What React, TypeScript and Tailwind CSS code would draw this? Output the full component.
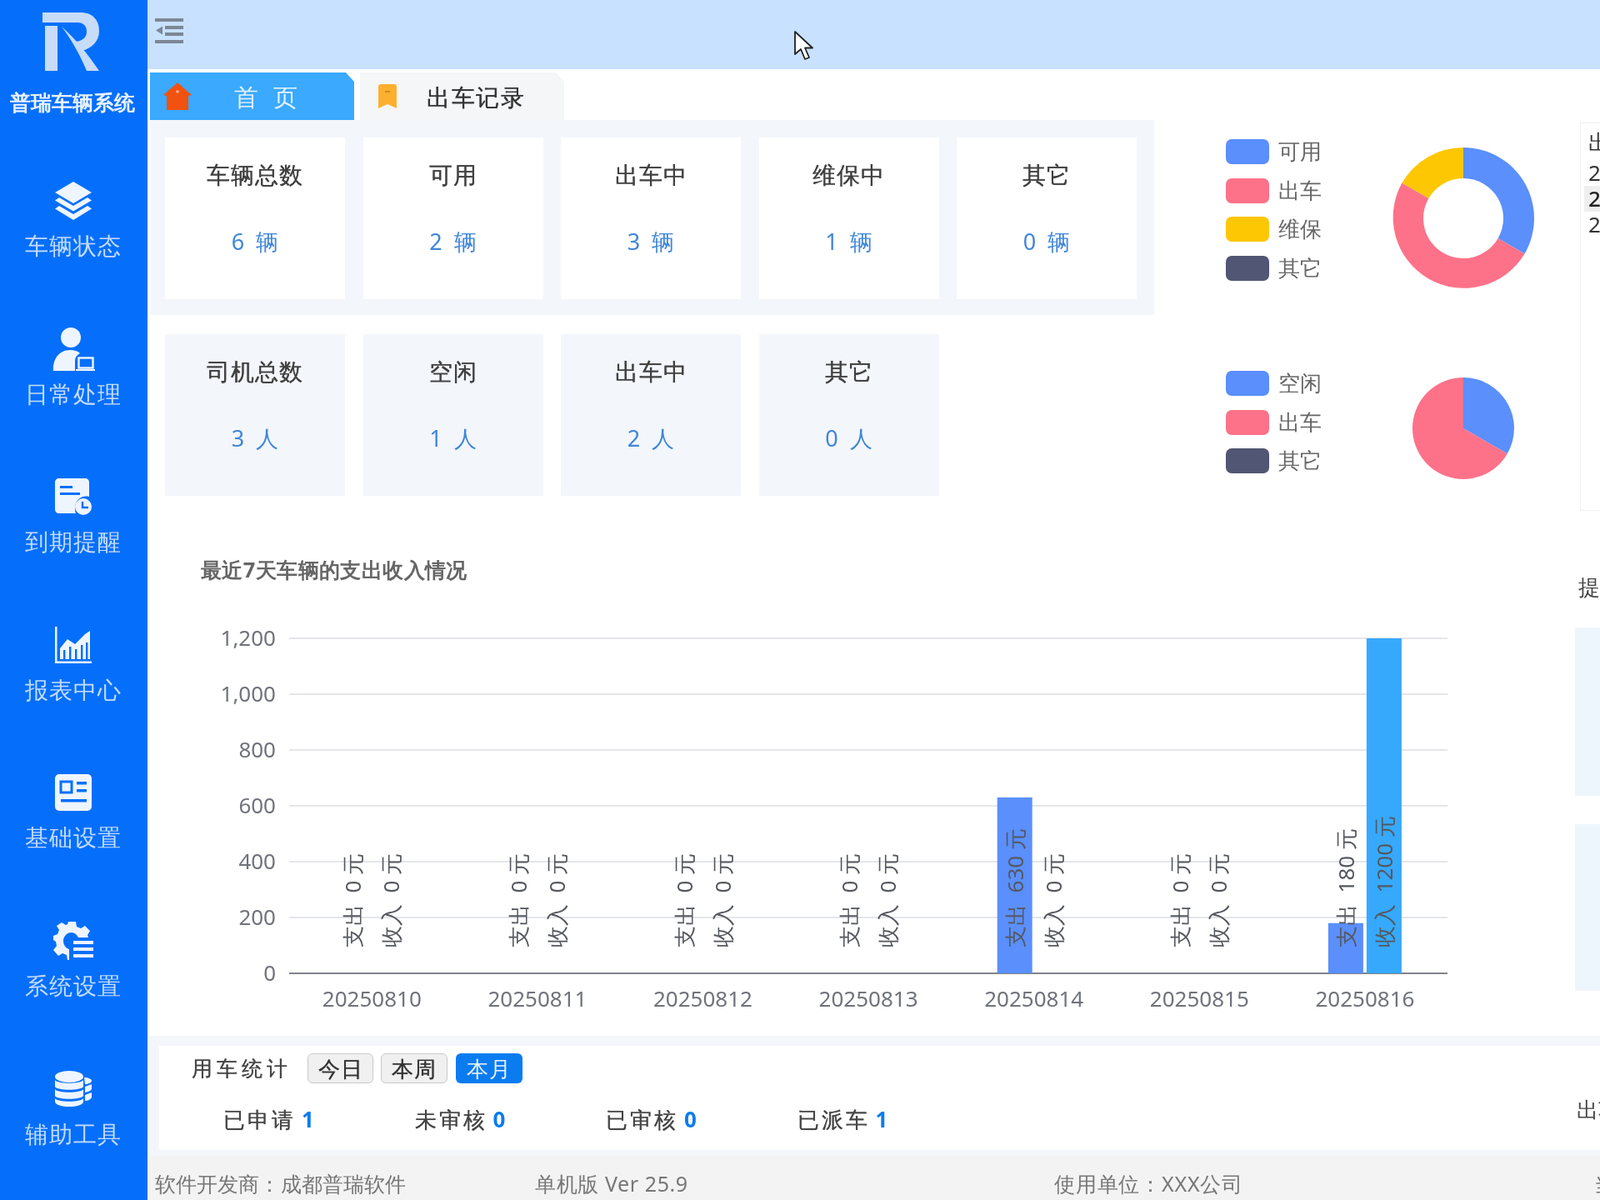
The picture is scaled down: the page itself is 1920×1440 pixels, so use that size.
import React from "react";

const FONT = '[font-family:"Noto_Sans","Noto_Sans_CJK_SC",sans-serif]';
const ICON = "#eef5ff";
const SIDE = "#056ffb";
const HEAVY = "[text-shadow:0_0_0.7px_currentColor]";

function Logo() {
  return (
    <svg width="70" height="72" viewBox="49 14 70 72" fill="#c7dcf8">
      <path d="M50 15H96C110 15 118 24 118 37C118 50 109 58 97 61L90 50C98 49 103 45 103 38C103 31 99 27 92 27H50Z" />
      <path d="M53 31H68V85H53Z" />
      <path d="M73 32C90 47 105 66 118 85H103C95 66 85 48 73 32Z" />
    </svg>
  );
}

const LayersIcon = () => (
  <svg width="50" height="50" viewBox="0 0 50 50" fill={ICON}>
    <path d="M25 2L47 15L25 28L3 15Z" />
    <path d="M8 21L25 31L42 21L47 24.5L25 37.5L3 24.5Z" />
    <path d="M8 31L25 41L42 31L47 34.5L25 48L3 34.5Z" />
  </svg>
);
const UserIcon = () => (
  <svg width="52" height="52" viewBox="0 0 52 52" fill={ICON}>
    <circle cx="23" cy="12" r="12" />
    <path d="M2 52C1 38 9 27 22 27C27 27 31 28 34 31C30 33 28 36 28 40V52Z" />
    <rect x="32.5" y="36.5" width="17" height="12" fill="none" stroke={ICON} strokeWidth="2.4" />
    <rect x="29" y="50" width="23" height="2" />
  </svg>
);
const CalendarIcon = () => (
  <svg width="44" height="44" viewBox="0 0 44 44" fill={ICON}>
    <path d="M5 0H36C39 0 41 2 41 5V22C34 20 24 24 24 36C24 38 24 40 25 42H5C2 42 0 40 0 37V5C0 2 2 0 5 0Z" />
    <rect x="6" y="9" width="15" height="3" fill={SIDE} />
    <rect x="6" y="17" width="24" height="3" fill={SIDE} />
    <circle cx="34" cy="34" r="10" />
    <path d="M33 28V35H40" fill="none" stroke={SIDE} strokeWidth="2.4" />
  </svg>
);
const ChartIcon = () => (
  <svg width="44" height="44" viewBox="0 0 44 44" fill={ICON}>
    <rect x="0" y="0" width="2.5" height="44" />
    <rect x="0" y="41.5" width="44" height="2.5" />
    <path d="M6 26L15 15L24 21L36 9L42 5V39H6Z" />
    <rect x="10" y="28" width="2.4" height="11" fill={SIDE} />
    <rect x="17" y="24" width="2.4" height="15" fill={SIDE} />
    <rect x="24" y="27" width="2.4" height="12" fill={SIDE} />
    <rect x="31" y="22" width="2.4" height="17" fill={SIDE} />
    <rect x="37" y="19" width="2.4" height="20" fill={SIDE} />
  </svg>
);
const NewsIcon = () => (
  <svg width="44" height="44" viewBox="0 0 44 44" fill={ICON}>
    <rect x="0" y="0" width="44" height="44" rx="5" />
    <rect x="7" y="9" width="13" height="13" fill="none" stroke={SIDE} strokeWidth="3" />
    <rect x="26" y="9" width="12" height="3.5" fill={SIDE} />
    <rect x="26" y="18" width="12" height="3.5" fill={SIDE} />
    <rect x="7" y="30" width="31" height="3.5" fill={SIDE} />
  </svg>
);
const GearIcon = () => (
  <svg width="48" height="46" viewBox="0 0 48 46" fill={ICON}>
    <path d="M18 0H27L28 6L33 8L38 5L44 11L41 16L42 19H30C28 15 25 13 22 13C16 13 12 18 12 23C12 28 15 32 19 33V46H17L16 40L11 38L6 41L0 34L4 29L3 24L0 22V17L5 15L7 10L4 5L10 1L15 4L17 3Z" />
    <rect x="24" y="23" width="24" height="4" />
    <rect x="24" y="31" width="24" height="4" />
    <rect x="24" y="39" width="24" height="4" />
  </svg>
);
const CoinsIcon = () => (
  <svg width="44" height="44" viewBox="0 0 44 44" fill={ICON}>
    <ellipse cx="17" cy="7" rx="17" ry="7" />
    <path d="M0 11C3 16 31 16 34 11V19C31 24 3 24 0 19Z" />
    <path d="M0 22C3 27 31 27 34 22V30C31 35 3 35 0 30Z" />
    <path d="M0 33C3 38 31 38 34 33V37C33 45 1 45 0 37Z" />
    <path d="M35 8C40 8 44 10 44 12C44 14 40 16 36 16Z" />
    <path d="M36 19L44 16V22C43 24 40 25 36 26Z" />
    <path d="M36 29L44 26V32C43 34 40 36 36 36Z" />
  </svg>
);

const menus: [React.ReactNode, string][] = [
  [<LayersIcon />, "车辆状态"],
  [<UserIcon />, "日常处理"],
  [<CalendarIcon />, "到期提醒"],
  [<ChartIcon />, "报表中心"],
  [<NewsIcon />, "基础设置"],
  [<GearIcon />, "系统设置"],
  [<CoinsIcon />, "辅助工具"],
];

function Sidebar() {
  return (
    <aside className="w-[177px] h-full shrink-0 bg-[#056ffb] flex flex-col items-center overflow-hidden">
      <div className="h-[216px] shrink-0 w-full flex flex-col items-center pt-[14px]">
        <div className="mr-[8px]">
          <Logo />
        </div>
        <div className="mt-[21px] mr-[4px] text-[24.5px] leading-[32px] font-bold text-[#e9f2ff] whitespace-nowrap">普瑞车辆系统</div>
      </div>
      {menus.map(([icon, label]) => (
        <div key={label} className="h-[177.6px] w-full shrink-0 flex flex-col items-center">
          <div className="h-[50px] mr-[2px] flex items-center justify-center">{icon}</div>
          <div className="mt-[10px] mr-[2px] text-[28px] leading-[36px] tracking-[1px] text-[#c4dcff] whitespace-nowrap">{label}</div>
        </div>
      ))}
    </aside>
  );
}

function Card({ title, value, muted }: { title: string; value: string; muted?: boolean }) {
  return (
    <div className={`w-[216px] h-[194px] shrink-0 flex flex-col items-center pt-[26px] ${muted ? "bg-[#f3f6fa]" : "bg-white"}`}>
      <div className={`text-[28px] leading-[36px] tracking-[1px] font-medium text-[#404040] ${HEAVY}`}>{title}</div>
      <div className="mt-[45px] text-[27px] leading-[36px] text-[#3f86d9] whitespace-pre">{value}</div>
    </div>
  );
}

function Legend({ items }: { items: [string, string][] }) {
  return (
    <div className="w-[115px] flex flex-col gap-[16.5px]">
      {items.map(([color, label]) => (
        <div key={label} className="h-[30px] flex items-center gap-[11px]">
          <div className="w-[52px] h-[30px] rounded-[7px]" style={{ backgroundColor: color }} />
          <span className="text-[26px] leading-[30px] -mt-[2px] text-[#666] whitespace-nowrap">{label}</span>
        </div>
      ))}
    </div>
  );
}

const BLUE = "#5a8ffc";
const PINK = "#fd7289";
const YELLOW = "#fec703";
const NAVY = "#505673";

function Donut() {
  return (
    <svg width="170" height="170" viewBox="0 0 170 170">
      <path d="M85 0A85 85 0 0 1 158.6 127.5L126.6 109A48 48 0 0 0 85 37Z" fill={BLUE} />
      <path d="M158.6 127.5A85 85 0 0 1 11.4 42.5L43.4 61A48 48 0 0 0 126.6 109Z" fill={PINK} />
      <path d="M11.4 42.5A85 85 0 0 1 85 0V37A48 48 0 0 0 43.4 61Z" fill={YELLOW} />
    </svg>
  );
}

function Pie() {
  return (
    <svg width="122" height="122" viewBox="0 0 122 122">
      <path d="M61 61V0A61 61 0 0 1 113.8 91.5Z" fill={BLUE} />
      <path d="M61 61L113.8 91.5A61 61 0 1 1 61 0Z" fill={PINK} />
    </svg>
  );
}

const days = ["20250810", "20250811", "20250812", "20250813", "20250814", "20250815", "20250816"];
const pay = [0, 0, 0, 0, 630, 0, 180];
const income = [0, 0, 0, 0, 0, 0, 1200];
const ticks = [0, 200, 400, 600, 800, 1000, 1200];

function BarChart() {
  const y0 = 1167;
  const unit = 402 / 1200;
  const left = 347;
  const step = 198.6;
  return (
    <svg width="1510" height="490" viewBox="240 740 1510 490" className="block">
      {ticks.map((t) => {
        const y = y0 - t * unit;
        return (
          <g key={t}>
            <line x1={left} x2={1737} y1={y} y2={y} stroke={t === 0 ? "#80838c" : "#e4e6ea"} strokeWidth="2" />
            <text x={331} y={y + 9} textAnchor="end" fontSize="26" fill="#70737c">
              {t === 0 ? "0" : t.toLocaleString("en-US")}
            </text>
          </g>
        );
      })}
      {days.map((d, i) => {
        const c = left + step * (i + 0.5);
        const h1 = pay[i] * unit;
        const h2 = income[i] * unit;
        return (
          <g key={d}>
            {h1 > 0 && <rect x={c - 44} y={y0 - h1} width="42" height={h1} fill={BLUE} />}
            {h2 > 0 && <rect x={c + 2} y={y0 - h2} width="42" height={h2} fill="#36a9fd" />}
            <text transform={`translate(${c - 13},1136) rotate(-90)`} fontSize="26" fill="#55585f" style={{ whiteSpace: "pre" }}>
              {`支出  ${pay[i]} 元`}
            </text>
            <text transform={`translate(${c + 33},1136) rotate(-90)`} fontSize="26" fill="#55585f" style={{ whiteSpace: "pre" }}>
              {`收入  ${income[i]} 元`}
            </text>
            <text x={c} y={1207} textAnchor="middle" fontSize="26" fill="#70737c">
              {d}
            </text>
          </g>
        );
      })}
    </svg>
  );
}

const HomeTabIcon = () => (
  <svg width="34" height="34" viewBox="0 0 34 34" fill="#f2520f">
    <path d="M17 0L34 15L30 16V33H4V16L0 15Z" />
    <circle cx="17" cy="11" r="2" fill="#f7a27f" />
  </svg>
);
const BookmarkIcon = () => (
  <svg width="22" height="30" viewBox="0 0 22 30" fill="#fdb02f">
    <path d="M3 0H19C21 0 22 1 22 3V29L11 24L0 29V3C0 1 1 0 3 0Z" />
    <rect x="8" y="8" width="6" height="2" fill="#d28a18" />
  </svg>
);
const MenuIcon = () => (
  <svg width="34" height="30" viewBox="0 0 34 30" fill="#7d8794">
    <rect x="0" y="0" width="34" height="4" />
    <rect x="12" y="9" width="22" height="4" />
    <rect x="12" y="17" width="22" height="4" />
    <rect x="0" y="26" width="34" height="4" />
    <path d="M9 9.5L1 14.5L9 19.5Z" />
  </svg>
);
const Cursor = () => (
  <svg width="26" height="38" viewBox="0 0 26 38" className="absolute left-[775px] top-[36px]">
    <path d="M2 2V29L9 23L14 35L19 33L14 21.5L23 21.5Z" fill="#fff" stroke="#222" strokeWidth="1.8" strokeLinejoin="round" />
  </svg>
);

const stats: [string, string][] = [
  ["已申请", "1"],
  ["未审核", "0"],
  ["已审核", "0"],
  ["已派车", "1"],
];

export default function App() {
  return (
    <div className={`w-[1920px] h-[1440px] flex overflow-hidden bg-white blur-[0.7px] ${FONT}`}>
      <Sidebar />
      <main className="flex-1 min-w-0 h-full flex flex-col relative">
        <Cursor />
        <header className="h-[83px] shrink-0 bg-[#c7e1ff] flex items-center pl-[9px] pb-[10px]">
          <MenuIcon />
        </header>
        <div className="h-[61px] shrink-0 pt-[4px] pl-[3px] flex gap-[7px] items-stretch">
          <div className="w-[245px] bg-[#3aa9fe] flex items-center pl-[16px] [clip-path:polygon(0_0,235px_0,245px_11px,245px_100%,0_100%)]">
            <HomeTabIcon />
            <span className="ml-[51px] text-[29px] leading-[36px] font-medium tracking-[1px] text-[#e3f2ff] whitespace-pre">首  页</span>
          </div>
          <div className="w-[245px] bg-[#f5f6f8] flex items-center pl-[22px] [clip-path:polygon(0_0,235px_0,245px_11px,245px_100%,0_100%)]">
            <BookmarkIcon />
            <span className={`ml-[36px] text-[28px] leading-[36px] font-medium tracking-[1.6px] text-[#333] ${HEAVY}`}>出车记录</span>
          </div>
        </div>

        <div className="h-[1099px] shrink-0 flex">
          <div className="w-[1712px] shrink-0 pl-[3px]">
            <div className="flex">
              <div className="w-[1205px] shrink-0">
                <div className="h-[234px] bg-[#f3f6fa] pl-[18px] pt-[21px] flex gap-[21.5px]">
                  <Card title="车辆总数" value="6  辆" />
                  <Card title="可用" value="2  辆" />
                  <Card title="出车中" value="3  辆" />
                  <Card title="维保中" value="1  辆" />
                  <Card title="其它" value="0  辆" />
                </div>
                <div className="mt-[24px] pl-[18px] flex gap-[21.5px] -translate-y-[1px]">
                  <Card muted title="司机总数" value="3  人" />
                  <Card muted title="空闲" value="1  人" />
                  <Card muted title="出车中" value="2  人" />
                  <Card muted title="其它" value="0  人" />
                </div>
              </div>
              <div className="ml-[86px]">
                <div className="h-[278px] pt-[23px] flex">
                  <Legend items={[[BLUE, "可用"], [PINK, "出车"], [YELLOW, "维保"], [NAVY, "其它"]]} />
                  <div className="ml-[85px] mt-[10px]">
                    <Donut />
                  </div>
                </div>
                <div className="pt-[23px] flex">
                  <Legend items={[[BLUE, "空闲"], [PINK, "出车"], [NAVY, "其它"]]} />
                  <div className="ml-[109px] mt-[8px]">
                    <Pie />
                  </div>
                </div>
              </div>
            </div>
            <div className="mt-[71px] ml-[61px] text-[25.4px] leading-[32px] tracking-[0.4px] font-bold text-[#666] whitespace-nowrap">最近7天车辆的支出收入情况</div>
            <div className="mt-[42px] ml-[60px]">
              <BarChart />
            </div>
          </div>
          <div className="flex-1 min-w-0 overflow-hidden">
            <div className="mt-[3px] ml-[7px] h-[466px] border border-[#eef0f3] pl-[4px] pt-[4px] overflow-hidden w-[200px]">
              <div className="pl-[5px] text-[26px] leading-[36px] font-medium text-[#333] whitespace-nowrap">出车记录</div>
              <div className="mt-[4px] pl-[5px] text-[26px] leading-[31px] text-[#333] whitespace-nowrap">2025-08</div>
              <div className="pl-[5px] text-[26px] leading-[31px] font-medium text-[#222] bg-[#efefef] whitespace-nowrap">2025-08</div>
              <div className="pl-[5px] text-[26px] leading-[31px] text-[#333] whitespace-nowrap">2025-08</div>
            </div>
            <div className="mt-[75px] ml-[5px] text-[26px] leading-[32px] font-medium text-[#444] whitespace-nowrap">提醒事项</div>
            <div className="mt-[33px] ml-[1px] h-[202px] bg-[#eef6fd]" />
            <div className="mt-[34px] ml-[1px] h-[200px] bg-[#eef6fd]" />
          </div>
        </div>

        <div className="h-[12px] shrink-0 bg-[#f3f6fa]" />
        <div className="h-[125px] shrink-0 bg-[#f3f6fa] flex">
          <div className="ml-[14px] flex-1 min-w-0 bg-white flex">
            <div className="w-[1701px] shrink-0 pt-[9px]">
              <div className="flex items-center h-[36px] pl-[39px]">
                <span className={`text-[25px] leading-[36px] -mt-[2px] font-medium tracking-[5px] text-[#444] w-[139px] whitespace-nowrap ${HEAVY}`}>用车统计</span>
                <span className={`w-[79px] h-[36px] rounded-[6px] border border-[#c9c9c9] bg-[#f0f0f0] flex items-center justify-center text-[26px] font-medium text-[#333] tracking-[1px] ${HEAVY}`}>今日</span>
                <span className={`ml-[9px] w-[80px] h-[36px] rounded-[6px] border border-[#c9c9c9] bg-[#f0f0f0] flex items-center justify-center text-[26px] font-medium text-[#333] tracking-[1px] ${HEAVY}`}>本周</span>
                <span className="ml-[10px] w-[80px] h-[36px] rounded-[6px] bg-[#0a7cf0] flex items-center justify-center text-[26px] text-[#e6f2ff] tracking-[1px]">本月</span>
              </div>
              <div className="mt-[25px] pl-[77px] flex">
                {stats.map(([label, val]) => (
                  <div key={label} className="w-[229.5px] shrink-0 flex items-center gap-[7px] h-[36px]">
                    <span className={`text-[26px] leading-[36px] font-medium tracking-[3px] text-[#444] whitespace-nowrap ${HEAVY}`}>{label}</span>
                    <span className="text-[26px] leading-[36px] font-bold text-[#0a7cf0]">{val}</span>
                  </div>
                ))}
              </div>
            </div>
            <div className="flex-1 min-w-0 overflow-hidden pt-[59px]">
              <span className="text-[26px] leading-[34px] font-medium text-[#444] whitespace-nowrap">出车</span>
            </div>
          </div>
        </div>
        <div className="flex-1 min-h-0 bg-[#f3f6fa] pt-[7px]">
          <div className="h-full bg-[#f3f3f4] flex items-center pl-[9px] text-[25px] leading-[34px] text-[#777] whitespace-nowrap pt-[13px] overflow-hidden">
            <span className="w-[456px] shrink-0 tracking-[0.1px]">软件开发商：成都普瑞软件</span>
            <span className="w-[623px] shrink-0 tracking-[0.6px]">单机版 Ver 25.9</span>
            <span className="w-[648px] shrink-0 tracking-[0.8px]">使用单位：XXX公司</span>
            <span className="shrink-0">当前</span>
          </div>
        </div>
      </main>
    </div>
  );
}
